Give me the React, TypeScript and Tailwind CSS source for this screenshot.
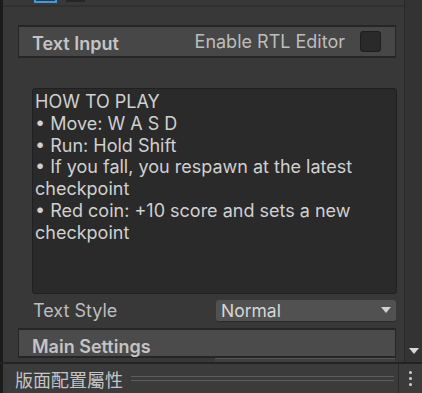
import React from 'react';

const lines = [
  'HOW TO PLAY',
  '• Move: W A S D',
  '• Run: Hold Shift',
  '• If you fall, you respawn at the latest checkpoint',
  '• Red coin: +10 score and sets a new checkpoint',
];

const App: React.FC = () => {
  return (
    <div
      className="w-[422px] h-[393px] bg-[#383838] flex flex-col overflow-hidden text-[#c4c4c4]"
      style={{ fontFamily: 'Inter, "Noto Sans CJK TC", sans-serif' }}
    >
      <div className="flex flex-1 min-h-0">
        {/* left edge */}
        <div className="w-[3px] bg-[#1b1b1b]" />

        {/* inspector content */}
        <div className="flex-1 flex flex-col min-w-0">
          <div className="h-[7px] flex border-b-2 border-[#303030] shrink-0">
            <div className="ml-[31px] w-[23px] h-[3px] border-2 border-t-0 border-[#3a9be0]" />
            <div className="ml-[9px] w-[19px] h-[2px] bg-[#262626]" />
          </div>

          <div className="ml-[15px] mr-[8px] mt-[18px] h-[33px] bg-[#474747] border-t-2 border-b-2 border-l border-r border-[#262626] flex items-center pl-[13px] pr-[14px] shrink-0">
            <span className="font-semibold text-[18px] leading-none pt-[4px]">Text Input</span>
            <span className="ml-auto text-[18px] leading-none text-[#bdbdbd] pt-[1px]">Enable RTL Editor</span>
            <div className="ml-[15px] w-[21px] h-[21px] rounded-[3px] bg-[#2a2a2a] border border-[#1e1e1e]" />
          </div>

          <div className="ml-[29px] mr-[7px] mt-[30px] h-[206px] bg-[#2a2a2a] border border-[#202020] rounded-[3px] px-[2px] pt-[2px] shrink-0">
            <div className="text-[18px] leading-[21.8px] text-[#d0d0d0]">
              {lines.map((l) => (
                <div key={l}>{l}</div>
              ))}
            </div>
          </div>

          <div className="flex items-center ml-[30px] mr-[8px] mt-[6px] h-[22px] shrink-0">
            <span className="text-[18px] leading-none text-[#bdbdbd]">Text Style</span>
            <div className="ml-auto w-[180px] h-[22px] bg-[#515151] rounded-[3px] border-b border-[#2a2a2a] flex items-center pl-[5px] pr-[5px]">
              <span className="text-[17.5px] leading-none text-[#d6d6d6]">Normal</span>
              <svg className="ml-auto" width="10" height="7" viewBox="0 0 10 7">
                <path d="M0 0 H10 L5 6 Z" fill="#d0d0d0" />
              </svg>
            </div>
          </div>

          <div className="ml-[15px] mr-[8px] mt-[6px] h-[30px] bg-[#4b4b4b] border-t-2 border-b-2 border-l border-r border-[#262626] flex items-center pl-[13px] shrink-0">
            <span className="font-semibold text-[18px] leading-none pt-[8px]">Main Settings</span>
          </div>
          <div className="ml-[212px] mr-[9px] h-[4px] border-t border-[#555] bg-[#3f3f3f] shrink-0" />
        </div>

        {/* scrollbar */}
        <div className="w-[18px] bg-[#333333] border-l border-[#2a2a2a] flex flex-col justify-end items-center pb-[8px]">
          <svg width="10" height="6" viewBox="0 0 10 6">
            <path d="M0 0 H10 L5 6 Z" fill="#d8d8d8" />
          </svg>
        </div>
      </div>

      {/* bottom bar */}
      <div className="h-[31px] shrink-0 bg-[#3b3b3b] border-t-2 border-[#232323] flex items-center">
        <div className="w-[3px] self-stretch bg-[#1b1b1b]" />
        <span
          className="ml-[12px] text-[18px] leading-none text-[#c4c4c4]"
          style={{ fontFamily: '"Noto Sans CJK TC", sans-serif' }}
        >
          版面配置屬性
        </span>
        <div className="ml-[8px] w-[263px] flex flex-col gap-[3px]">
          <div className="h-px bg-[#5c5c5c]" />
          <div className="h-px bg-[#5c5c5c]" />
        </div>
        <div className="ml-[4px] w-px self-stretch bg-[#2a2a2a]" />
        <div className="flex-1 flex flex-col items-center gap-[3px]">
          <div className="w-[3px] h-[3px] rounded-full bg-[#cfcfcf]" />
          <div className="w-[3px] h-[3px] rounded-full bg-[#cfcfcf]" />
          <div className="w-[3px] h-[3px] rounded-full bg-[#cfcfcf]" />
        </div>
      </div>
    </div>
  );
};

export default App;
